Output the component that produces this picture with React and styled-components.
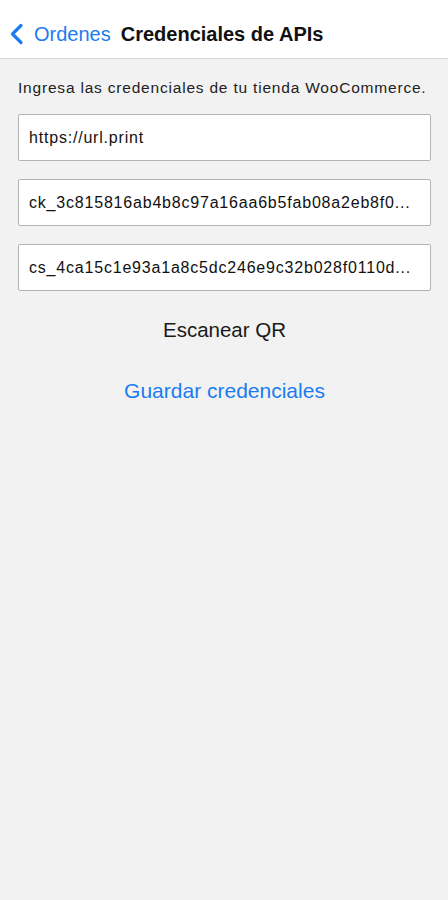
import React from "react";
import styled, { createGlobalStyle } from "styled-components";

const Global = createGlobalStyle`
  html, body {
    margin: 0;
    padding: 0;
    background: #f2f2f2;
    font-family: 'Liberation Sans', Arial, sans-serif;
  }
`;

export default function App() {
  const fields = [
    "https://url.print",
    "ck_3c815816ab4b8c97a16aa6b5fab08a2eb8f0...",
    "cs_4ca15c1e93a1a8c5dc246e9c32b028f0110d...",
  ];

  return (
    <>
      <Global />
      <Page>
        <Header>
          <Back>
            <svg width="15" height="22" viewBox="0 0 15 22">
              <path d="M12 2.5 L3.5 11 L12 19.5" fill="none" stroke="#1a7cf0" strokeWidth="3.2" strokeLinecap="round" strokeLinejoin="round" />
            </svg>
            <BackText>Ordenes</BackText>
          </Back>
          <Title>Credenciales de APIs</Title>
        </Header>
        <Content>
          <Hint>Ingresa las credenciales de tu tienda WooCommerce.</Hint>
          <Fields>
            {fields.map((f) => (
              <Field key={f}>{f}</Field>
            ))}
          </Fields>
          <Action>Escanear QR</Action>
          <Action $blue>Guardar credenciales</Action>
        </Content>
      </Page>
    </>
  );
}

const Page = styled.div`
  min-height: 900px;
  background: #f2f2f2;
`;

const Header = styled.div`
  height: 59px;
  background: #ffffff;
  border-bottom: 1px solid #d8d8d8;
  display: flex;
  align-items: center;
  padding: 10px 0 0 9px;
  box-sizing: border-box;
`;

const Back = styled.div`
  display: flex;
  align-items: center;
  gap: 10px;
  margin-right: 10px;
`;

const BackText = styled.span`
  color: #1a7cf0;
  font-size: 20px;
`;

const Title = styled.span`
  color: #111;
  font-size: 20px;
  font-weight: 700;
`;

const Content = styled.div`
  padding: 20px 17px 0 18px;
  display: flex;
  flex-direction: column;
`;

const Hint = styled.p`
  margin: 0;
  font-size: 15.5px;
  letter-spacing: 0.8px;
  color: #222;
  line-height: 18px;
  white-space: nowrap;
`;

const Fields = styled.div`
  display: flex;
  flex-direction: column;
  gap: 18px;
  margin-top: 17px;
`;

const Field = styled.div`
  height: 47px;
  box-sizing: border-box;
  background: #fff;
  border: 1.5px solid #b4b4b4;
  border-radius: 2px;
  padding: 0 10px;
  display: flex;
  align-items: center;
  font-size: 16px;
  letter-spacing: 0.8px;
  color: #111;
  white-space: nowrap;
  overflow: hidden;
`;

const Action = styled.div`
  text-align: center;
  font-size: ${(p) => (p.$blue ? "21px" : "20.5px")};
  color: ${(p) => (p.$blue ? "#1a7cf0" : "#1a1a1a")};
  margin-top: ${(p) => (p.$blue ? "35px" : "26px")};
  line-height: 26px;
`;
